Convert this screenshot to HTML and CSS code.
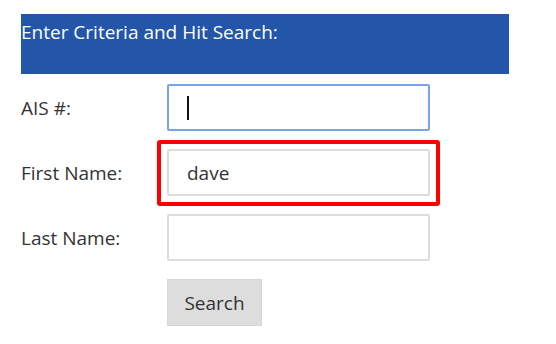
FILE: index.html
```html
<!DOCTYPE html>
<html>
<head>
<meta charset="utf-8">
<link rel="stylesheet" href="styles.css">
</head>
<body>
<div class="page">
  <div class="header">Enter Criteria and Hit Search:</div>
  <form class="form">
    <div class="row">
      <label class="label">AIS #:</label>
      <div class="field field-focus"><span class="caret"></span></div>
    </div>
    <div class="row">
      <label class="label">First Name:</label>
      <div class="field highlight">dave</div>
    </div>
    <div class="row">
      <label class="label">Last Name:</label>
      <div class="field"></div>
    </div>
    <div class="row">
      <span class="label"></span>
      <button type="button" class="btn">Search</button>
    </div>
  </form>
</div>
</body>
</html>
```

FILE: styles.css
```css
html, body {
  margin: 0;
  padding: 0;
  background: #fff;
}
body {
  font-family: "Open Sans", "Liberation Sans", sans-serif;
  color: #333;
}
.page {
  padding: 14px 0 0 21px;
  width: 488px;
}
.header {
  background: #2355a8;
  color: #fff;
  font-size: 19px;
  height: 60px;
  box-sizing: border-box;
  padding: 5px 0 0 0;
  line-height: 26px;
}
.form {
  display: flex;
  flex-direction: column;
  gap: 18px;
  padding-top: 10px;
}
.row {
  display: flex;
  align-items: center;
}
.label {
  width: 146px;
  font-size: 19px;
  color: #333;
}
.field {
  width: 263px;
  height: 47px;
  box-sizing: border-box;
  border: 2px solid #dddddd;
  border-radius: 2px;
  font-size: 19px;
  padding: 0 18px;
  display: flex;
  align-items: center;
  color: #333;
  position: relative;
}
.field-focus {
  border-color: #78a3ea;
}
.caret {
  display: block;
  width: 2px;
  height: 24px;
  background: #111;
}
.highlight::after {
  content: "";
  position: absolute;
  left: -12px;
  top: -11px;
  right: -12px;
  bottom: -12px;
  border: 4.5px solid #ff0000;
  border-radius: 3px;
}
.btn {
  width: 95px;
  height: 47px;
  background: #dddddd;
  border: 1px solid #d6d6d6;
  font-family: inherit;
  font-size: 19px;
  color: #333;
  padding: 0;
}
```
